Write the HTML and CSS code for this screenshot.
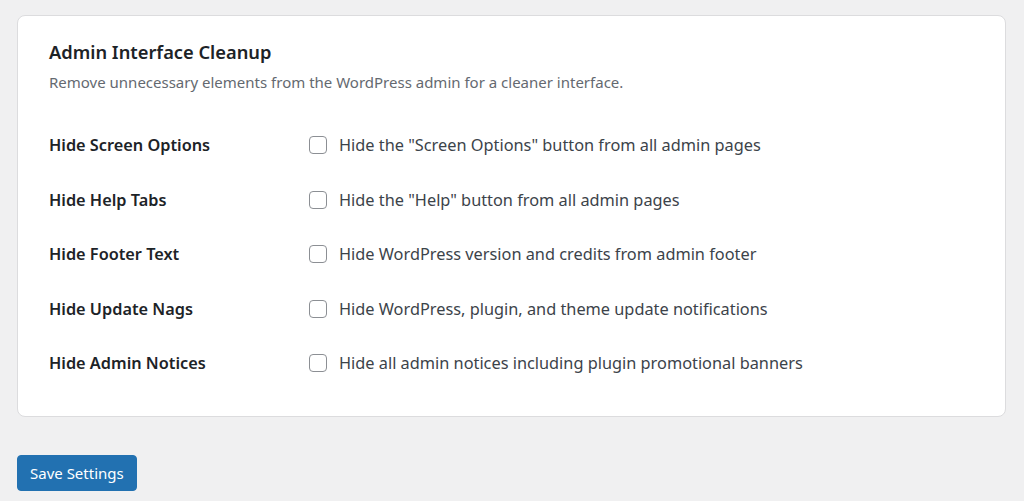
FILE: index.html
```html
<!DOCTYPE html>
<html lang="en">
<head>
<meta charset="utf-8">
<title>Admin Interface Cleanup</title>
<link rel="stylesheet" href="styles.css">
</head>
<body>
<div class="wrap">
  <section class="card">
    <h2 class="card-title">Admin Interface Cleanup</h2>
    <p class="card-desc">Remove unnecessary elements from the WordPress admin for a cleaner interface.</p>
    <div class="rows">
      <div class="row">
        <div class="label">Hide Screen Options</div>
        <label class="option"><span class="check"></span><span>Hide the "Screen Options" button from all admin pages</span></label>
      </div>
      <div class="row">
        <div class="label">Hide Help Tabs</div>
        <label class="option"><span class="check"></span><span>Hide the "Help" button from all admin pages</span></label>
      </div>
      <div class="row">
        <div class="label">Hide Footer Text</div>
        <label class="option"><span class="check"></span><span>Hide WordPress version and credits from admin footer</span></label>
      </div>
      <div class="row">
        <div class="label">Hide Update Nags</div>
        <label class="option"><span class="check"></span><span>Hide WordPress, plugin, and theme update notifications</span></label>
      </div>
      <div class="row">
        <div class="label">Hide Admin Notices</div>
        <label class="option"><span class="check"></span><span>Hide all admin notices including plugin promotional banners</span></label>
      </div>
    </div>
  </section>
  <div class="actions">
    <button class="btn-primary" type="button">Save Settings</button>
  </div>
</div>
</body>
</html>
```
FILE: styles.css
```css
* { box-sizing: border-box; }
html, body { margin: 0; padding: 0; }
body {
  background: #f0f0f1;
  font-family: "Noto Sans", "Open Sans", sans-serif;
  color: #1d2327;
}
.wrap {
  padding: 15px 18px 0 17px;
}
.card {
  background: #fff;
  border: 1px solid #dcdcde;
  border-radius: 8px;
  padding: 24px 31px 25px;
}
.card-title {
  margin: 0;
  font-size: 18.3px;
  font-weight: 600;
  line-height: 24px;
  color: #1d2327;
}
.card-desc {
  margin: 8px 0 0;
  font-size: 15px;
  line-height: 20px;
  color: #646970;
}
.rows {
  margin-top: 26px;
  display: flex;
  flex-direction: column;
}
.row {
  display: grid;
  grid-template-columns: 260px 1fr;
  align-items: center;
  height: 54.5px;
}
.label {
  font-size: 16.3px;
  font-weight: 600;
  line-height: 24px;
  color: #1d2327;
}
.option {
  display: flex;
  align-items: center;
  gap: 12px;
  font-size: 16.32px;
  line-height: 24px;
  color: #3c434a;
}
.check {
  width: 18px;
  height: 18px;
  flex: 0 0 18px;
  border: 1px solid #8c8f94;
  border-radius: 4px;
  background: #fff;
}
.actions {
  margin-top: 38px;
}
.btn-primary {
  display: inline-block;
  height: 36px;
  padding: 0 12px;
  background: #2271b1;
  border: 1px solid #2271b1;
  border-radius: 4px;
  color: #fff;
  font-family: "Noto Sans", "Open Sans", sans-serif;
  font-size: 15px;
  line-height: 34px;
}
```
